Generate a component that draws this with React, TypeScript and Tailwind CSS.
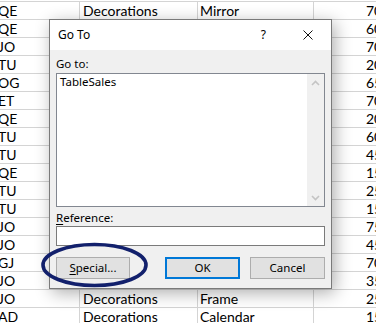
import React from "react";

type Row = [string, string, string, string];

const rows: Row[] = [
  ["QE", "Decorations", "Mirror", "70"],
  ["QE", "", "", "60"],
  ["JO", "", "", "70"],
  ["TU", "", "", "20"],
  ["OG", "", "", "65"],
  ["ET", "", "", "70"],
  ["QE", "", "", "20"],
  ["TU", "", "", "60"],
  ["TU", "", "", "45"],
  ["QE", "", "", "15"],
  ["TU", "", "", "25"],
  ["TU", "", "", "15"],
  ["JO", "", "", "75"],
  ["JO", "", "", "45"],
  ["GJ", "", "", "70"],
  ["JO", "", "", "35"],
  ["JO", "Decorations", "Frame", "25"],
  ["AD", "Decorations", "Calendar", "15"],
];

function Chevron({ up }: { up?: boolean }) {
  return (
    <svg width="9" height="6" viewBox="0 0 9 6">
      <path
        d={up ? "M1 5 L4.5 1.5 L8 5" : "M1 1 L4.5 4.5 L8 1"}
        fill="none"
        stroke="#c4c4c4"
        strokeWidth="1.6"
      />
    </svg>
  );
}

export default function App() {
  return (
    <div className="relative w-[376px] h-[323px] overflow-hidden bg-white">
      {/* spreadsheet */}
      <div className="pt-[1px] font-['Lato',sans-serif] text-[14px] text-black">
        {rows.map((r, i) => (
          <div key={i} className="flex h-[18px] border-t border-[#d4d4d4] leading-[17px]">
            <div className="w-[80px] shrink-0 border-r border-[#d4d4d4] overflow-hidden whitespace-nowrap">
              <span className="ml-[-2px]">{r[0]}</span>
            </div>
            <div className="w-[118px] shrink-0 border-r border-[#d4d4d4] pl-[3px] overflow-hidden whitespace-nowrap">
              {r[1]}
            </div>
            <div className="w-[116px] shrink-0 border-r border-[#d4d4d4] pl-[2px] overflow-hidden whitespace-nowrap">
              {r[2]}
            </div>
            <div className="flex-1 pl-[52px] whitespace-nowrap">{r[3]}</div>
          </div>
        ))}
      </div>

      {/* Go To dialog */}
      <div className="absolute left-[49px] top-[19px] w-[283px] h-[270px] border border-[#7a7a7a] bg-[#f0f0f0] shadow-[3px_4px_16px_rgba(0,0,0,0.32)] flex flex-col font-['Noto_Sans',sans-serif] text-[11.5px] text-black">
        <div className="h-[30px] shrink-0 bg-white flex items-center pl-[8px]">
          <span className="text-[12px]">Go To</span>
          <span className="ml-auto text-[12px] leading-none">?</span>
          <svg className="ml-[37px] mr-[18px]" width="10" height="10" viewBox="0 0 10 10">
            <path d="M0.5 0.5 L9.5 9.5 M9.5 0.5 L0.5 9.5" stroke="#111" strokeWidth="1" />
          </svg>
        </div>
        <div className="flex-1 px-[6px] pt-[6px] flex flex-col">
          <div className="h-[17px] leading-[16px]">Go to:</div>
          <div className="h-[134px] border border-[#828790] bg-white flex">
            <div className="flex-1 pl-[3px] leading-[16px]">TableSales</div>
            <div className="w-[17px] bg-[#f0f0f0] flex flex-col justify-between items-center">
              <div className="h-[17px] flex items-center justify-center">
                <Chevron up />
              </div>
              <div className="h-[17px] flex items-center justify-center">
                <Chevron />
              </div>
            </div>
          </div>
          <div className="mt-[2px] h-[17px] leading-[17px]">
            <span className="underline underline-offset-[2px]">R</span>eference:
          </div>
          <div className="h-[20px] border border-[#7a7a7a] bg-white" />
          <div className="mt-[11px] flex">
            <div className="w-[74px] h-[22px] border border-[#adadad] bg-[#e1e1e1] flex items-center justify-center">
              <span>
                <span className="underline underline-offset-[2px]">S</span>pecial...
              </span>
            </div>
            <div className="ml-auto w-[75px] h-[22px] border-2 border-[#0078d7] bg-[#e1e1e1] flex items-center justify-center">
              OK
            </div>
            <div className="ml-[10px] w-[75px] h-[22px] border border-[#adadad] bg-[#e1e1e1] flex items-center justify-center">
              Cancel
            </div>
          </div>
        </div>
      </div>

      {/* annotation ellipse */}
      <svg className="absolute left-0 top-0 pointer-events-none" width="376" height="323">
        <ellipse cx="94.5" cy="265" rx="51.5" ry="20.5" fill="none" stroke="#12206c" strokeWidth="3.6" />
      </svg>
    </div>
  );
}
